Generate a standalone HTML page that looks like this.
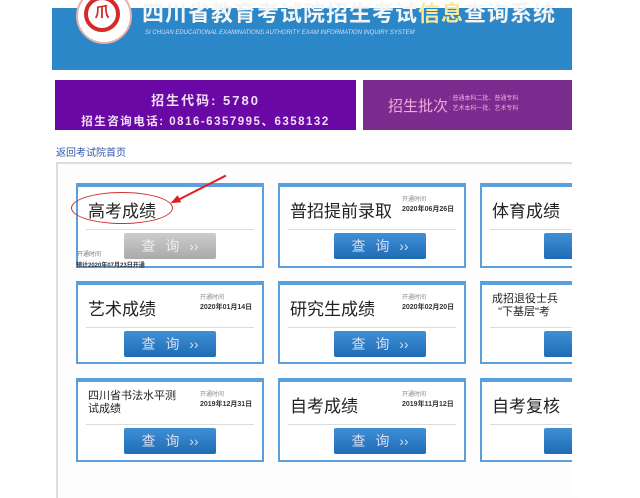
<!DOCTYPE html><html><head><meta charset="utf-8"><style>
body{margin:0;width:640px;height:496px;background:#fff;position:relative;overflow:hidden;font-family:"Liberation Sans","Noto Sans CJK SC",sans-serif}
.a{position:absolute}
.card{position:absolute;border:2px solid #5b9fdc;border-top-width:4px;background:#fff;box-sizing:border-box}
.card .t{position:absolute;left:10px;top:10px;font-size:17px;color:#222}
.card .sep{position:absolute;left:8px;right:8px;top:42px;border-top:1px solid #ddd}
.card .d{position:absolute;left:122px;top:8px;font-size:6px;color:#888;line-height:10px}
.card .d b{color:#333;font-size:7px}
.btn{position:absolute;width:92px;height:26px;background:linear-gradient(#3e90d6,#1f6cb4);color:#dde;font-size:14px;text-align:center;line-height:26px;border-radius:2px;word-spacing:6px}
</style></head><body>
<div class="a" style="left:52px;top:8px;width:520px;height:62px;background:#2b87c8"></div>
<div class="a" style="left:76px;top:-12px;width:52px;height:52px;border-radius:50%;background:#fff;border:2px solid #e8b0a8"></div>
<div class="a" style="left:84px;top:-4px;width:36px;height:36px;border-radius:50%;border:4px solid #d42a2a;box-sizing:border-box;color:#d42a2a;font-size:15px;font-weight:bold;text-align:center;line-height:26px">爪</div>
<div class="a" style="left:142px;top:-4px;font-size:22px;font-weight:bold;color:#f4f4f4;letter-spacing:1px">四川省教育考试院招生考试<span style="color:#f5e9a0">信息</span>查询系统</div>
<div class="a" style="left:145px;top:30px;font-size:6px;color:#dde;font-style:italic">SI CHUAN EDUCATIONAL EXAMINATIONS AUTHORITY EXAM INFORMATION INQUIRY SYSTEM</div>
<div class="a" style="left:55px;top:80px;width:301px;height:50px;background:#6a08a6;color:#f0e0f5;text-align:center;font-weight:bold">
<div style="font-size:13px;margin-top:10px;letter-spacing:2px">招生代码: 5780</div>
<div style="font-size:11.5px;margin-top:4px;letter-spacing:1.5px">招生咨询电话: 0816-6357995、6358132</div></div>
<div class="a" style="left:363px;top:80px;width:210px;height:50px;background:#7a2c8e;color:#ead"><span class="a" style="left:25px;top:15px;font-size:15px">招生批次</span><span class="a" style="left:86px;top:14px;font-size:6px;line-height:10px">: 普通本科二批、普通专科<br>: 艺术本科一批、艺术专科</span></div>
<div class="a" style="left:56px;top:144px;font-size:10px;color:#3355aa">返回考试院首页</div>
<div class="a" style="left:56px;top:162px;width:520px;height:334px;border-left:2px solid #ddd;border-top:2px solid #ddd;background:#fdfdfd"></div>

<div class="card" style="left:76px;top:183px;width:188px;height:85px"><div class="sep"></div><div class="t">高考成绩</div></div>
<div class="a" style="left:71px;top:192px;width:100px;height:30px;border:1.5px solid #d03030;border-radius:50%"></div>
<div class="a" style="left:176px;top:200px;width:56px;height:2px;background:#e02020;transform:rotate(-27deg);transform-origin:left center"></div>
<div class="a" style="left:170px;top:197px;width:0;height:0;border-top:4px solid transparent;border-bottom:4px solid transparent;border-right:10px solid #e02020;transform:rotate(-27deg)"></div>
<div class="btn" style="left:124px;top:233px;background:linear-gradient(#ccc,#aaa);color:#eee">查 询 ››</div>
<div class="a" style="left:77px;top:249px;font-size:6px;color:#777">开通时间</div>
<div class="a" style="left:76px;top:260px;font-size:6px;color:#333;font-weight:bold">预计2020年07月23日开通</div>

<div class="card" style="left:278px;top:183px;width:188px;height:85px"><div class="sep"></div><div class="t">普招提前录取</div><div class="d">开通时间<br><b>2020年06月26日</b></div></div>
<div class="btn" style="left:334px;top:233px">查 询 ››</div>
<div class="card" style="left:480px;top:183px;width:120px;height:85px"><div class="sep"></div><div class="t">体育成绩</div></div>
<div class="btn" style="left:544px;top:233px">查 询</div>

<div class="card" style="left:76px;top:281px;width:188px;height:83px"><div class="sep"></div><div class="t">艺术成绩</div><div class="d">开通时间<br><b>2020年01月14日</b></div></div>
<div class="btn" style="left:124px;top:331px">查 询 ››</div>
<div class="card" style="left:278px;top:281px;width:188px;height:83px"><div class="sep"></div><div class="t">研究生成绩</div><div class="d">开通时间<br><b>2020年02月20日</b></div></div>
<div class="btn" style="left:334px;top:331px">查 询 ››</div>
<div class="card" style="left:480px;top:281px;width:120px;height:83px"><div class="sep"></div><div class="t" style="font-size:11px;top:8px;line-height:13px">成招退役士兵<br>&nbsp;&nbsp;"下基层"考</div></div>
<div class="btn" style="left:544px;top:331px">查 询</div>

<div class="card" style="left:76px;top:378px;width:188px;height:84px"><div class="sep"></div><div class="t" style="font-size:11px;top:8px;line-height:13px">四川省书法水平测<br>试成绩</div><div class="d">开通时间<br><b>2019年12月31日</b></div></div>
<div class="btn" style="left:124px;top:428px">查 询 ››</div>
<div class="card" style="left:278px;top:378px;width:188px;height:84px"><div class="sep"></div><div class="t">自考成绩</div><div class="d">开通时间<br><b>2019年11月12日</b></div></div>
<div class="btn" style="left:334px;top:428px">查 询 ››</div>
<div class="card" style="left:480px;top:378px;width:120px;height:84px"><div class="sep"></div><div class="t">自考复核</div></div>
<div class="btn" style="left:544px;top:428px">查 询</div>
<div class="a" style="left:572px;top:0;width:68px;height:496px;background:#fff"></div>
</body></html>
